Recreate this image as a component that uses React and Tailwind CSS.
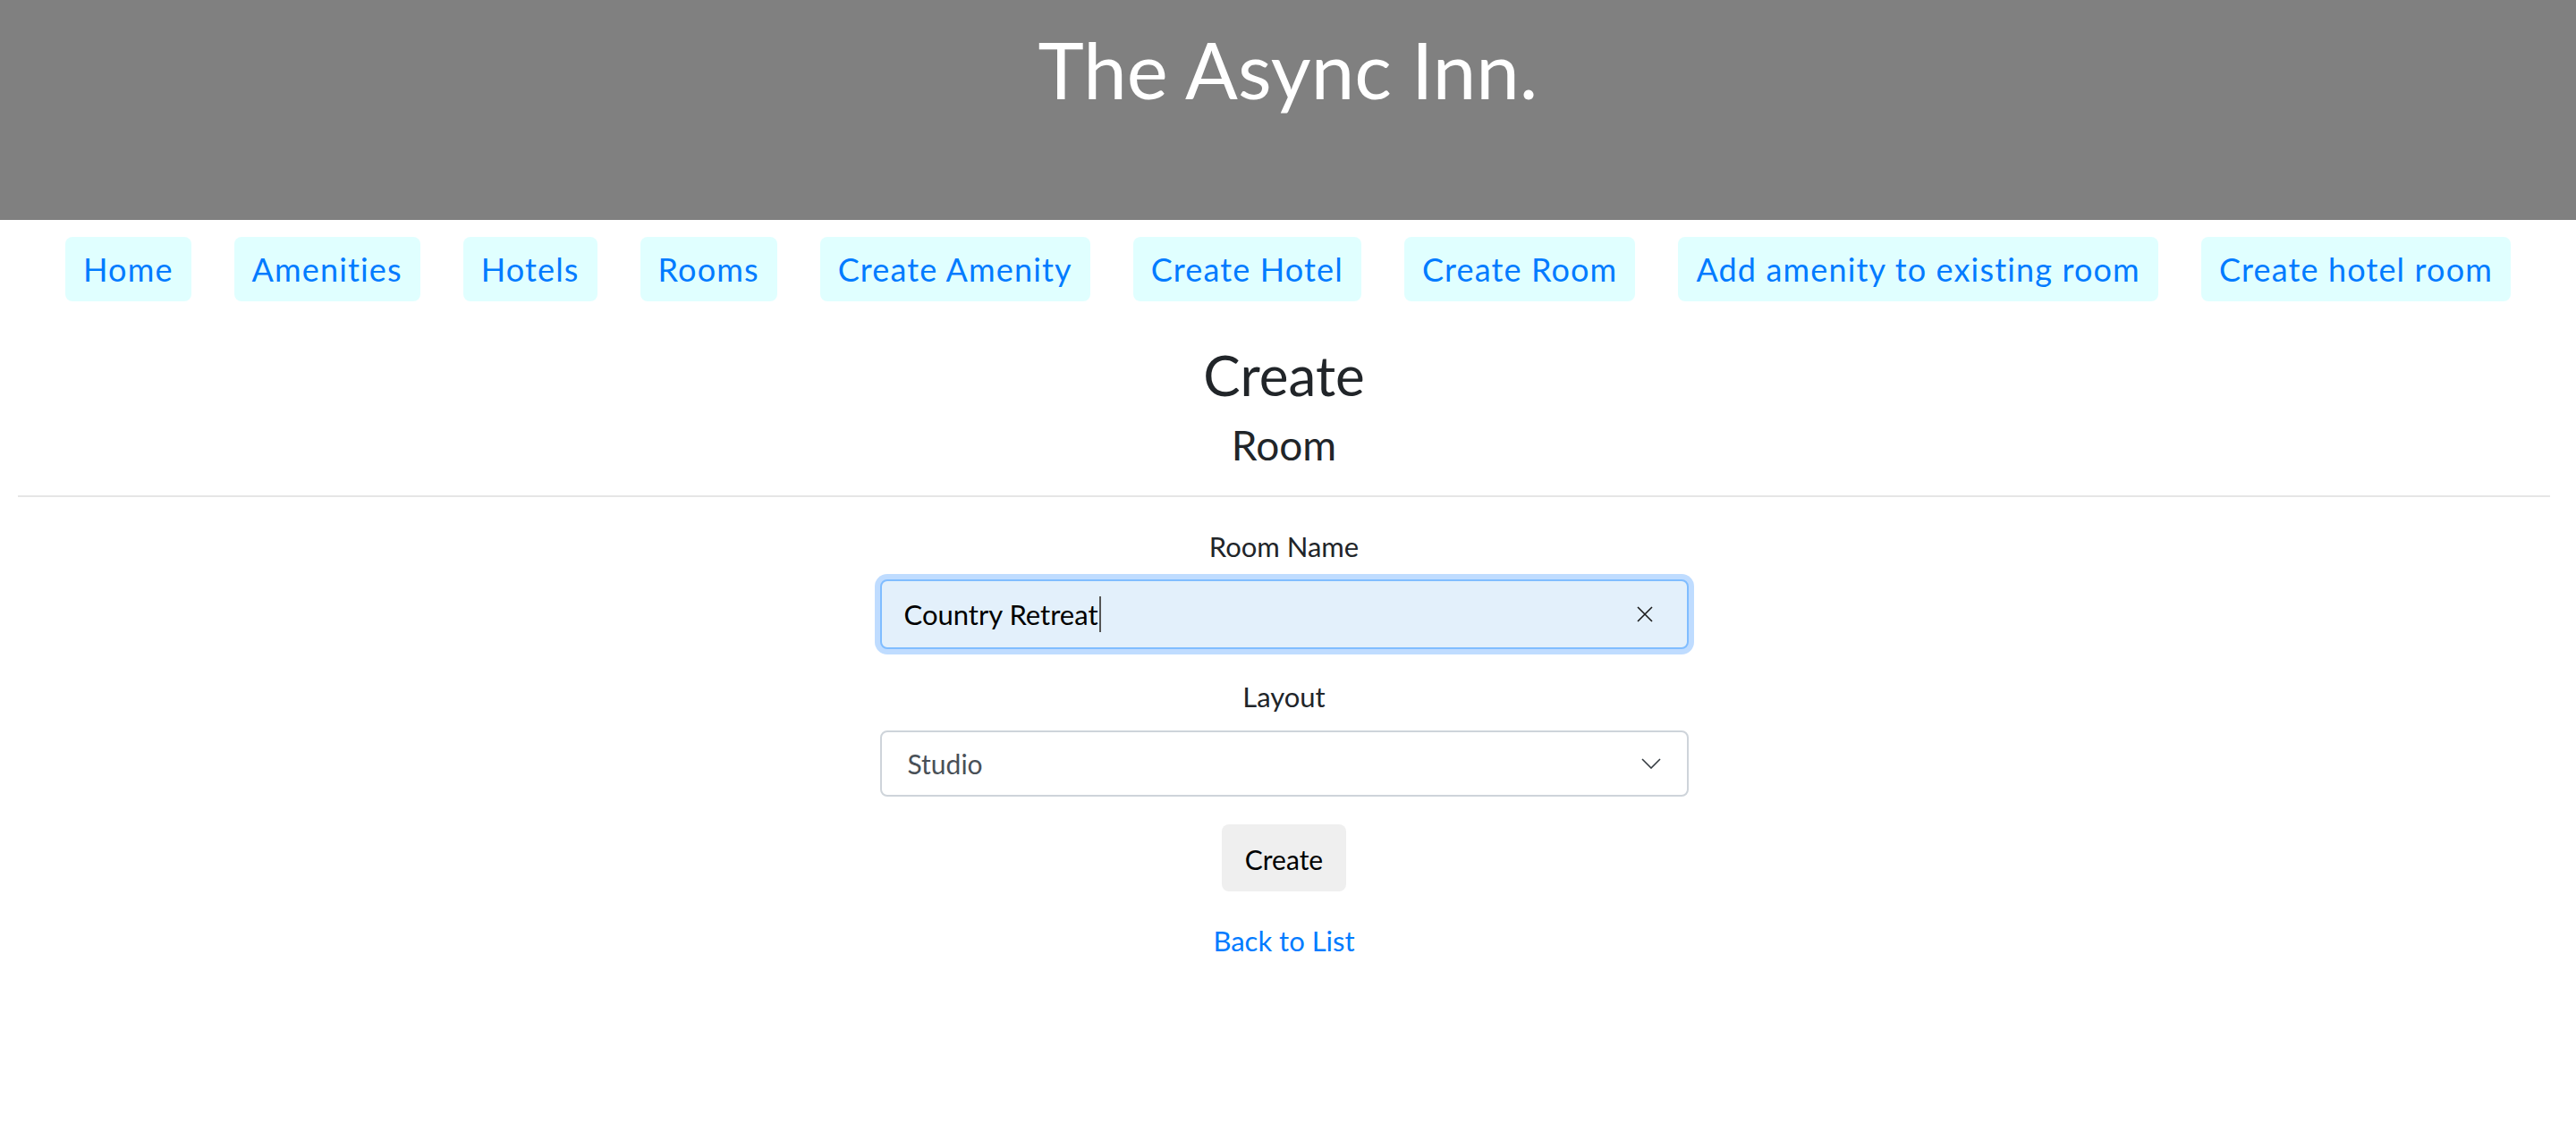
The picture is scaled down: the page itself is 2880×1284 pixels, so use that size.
const links = [
  'Home',
  'Amenities',
  'Hotels',
  'Rooms',
  'Create Amenity',
  'Create Hotel',
  'Create Room',
  'Add amenity to existing room',
  'Create hotel room'
];

function ClearIcon() {
  return (
    <svg width="18" height="18" viewBox="0 0 18 18" fill="none" stroke="#1a1a1a" strokeWidth="1.6">
      <path d="M1 1 L17 17 M17 1 L1 17" />
    </svg>
  );
}

function Chevron() {
  return (
    <svg width="22" height="12" viewBox="0 0 22 12" fill="none" stroke="#343a40" strokeWidth="1.6">
      <path d="M1 1 L11 11 L21 1" />
    </svg>
  );
}

export default function App() {
  return (
    <div className="min-h-[1284px] bg-white font-['Lato','Liberation_Sans',sans-serif] text-[#212529]">
      <header className="h-[246px] bg-[#808080] pt-[34px]">
        <h1 className="text-center text-[87px] leading-none text-white">The Async Inn.</h1>
      </header>

      <nav className="mt-[19px] flex justify-center gap-[48px]">
        {links.map((label) => (
          <a
            key={label}
            href="#"
            className="flex h-[72px] items-center rounded-[8px] bg-[#e0ffff] px-[20px] text-[36px] leading-none tracking-[1.15px] text-[#007bff]"
          >
            {label}
          </a>
        ))}
      </nav>

      <main className="flex w-[2871px] flex-col items-center">
        <h2 className="mt-[51px] text-[62px] leading-none">Create</h2>
        <h3 className="mt-[25px] text-[46px] leading-none">Room</h3>
        <hr className="mt-[33px] h-[2px] w-[2831px] border-0 bg-[#e6e6e6]" />

        <label className="mt-[40px] text-[31px] leading-none">Room Name</label>
        <div className="mt-[21px] flex h-[78px] w-[904px] items-center rounded-[8px] border-2 border-[#80bdff] bg-[#e3f0fb] pl-[25px] pr-[38px] shadow-[0_0_0_6px_#bfdcff]">
          <span className="text-[31px] leading-none text-black">Country Retreat</span>
          <span className="ml-[1px] h-[40px] w-[2px] bg-[#555]" />
          <span className="ml-auto flex">
            <ClearIcon />
          </span>
        </div>

        <label className="mt-[38px] text-[31px] leading-none">Layout</label>
        <div className="mt-[22px] flex h-[74px] w-[904px] items-center rounded-[8px] border-2 border-[#ced4da] bg-white pl-[29px] pr-[29px]">
          <span className="text-[30px] leading-none text-[#495057]">Studio</span>
          <span className="ml-auto flex">
            <Chevron />
          </span>
        </div>

        <button className="mt-[31px] flex h-[75px] w-[139px] items-center justify-center rounded-[8px] bg-[#efefef] pt-[2px] text-[30px] leading-none text-black">
          Create
        </button>

        <a href="#" className="mt-[40px] text-[31px] leading-none text-[#007bff]">
          Back to List
        </a>
      </main>
    </div>
  );
}
